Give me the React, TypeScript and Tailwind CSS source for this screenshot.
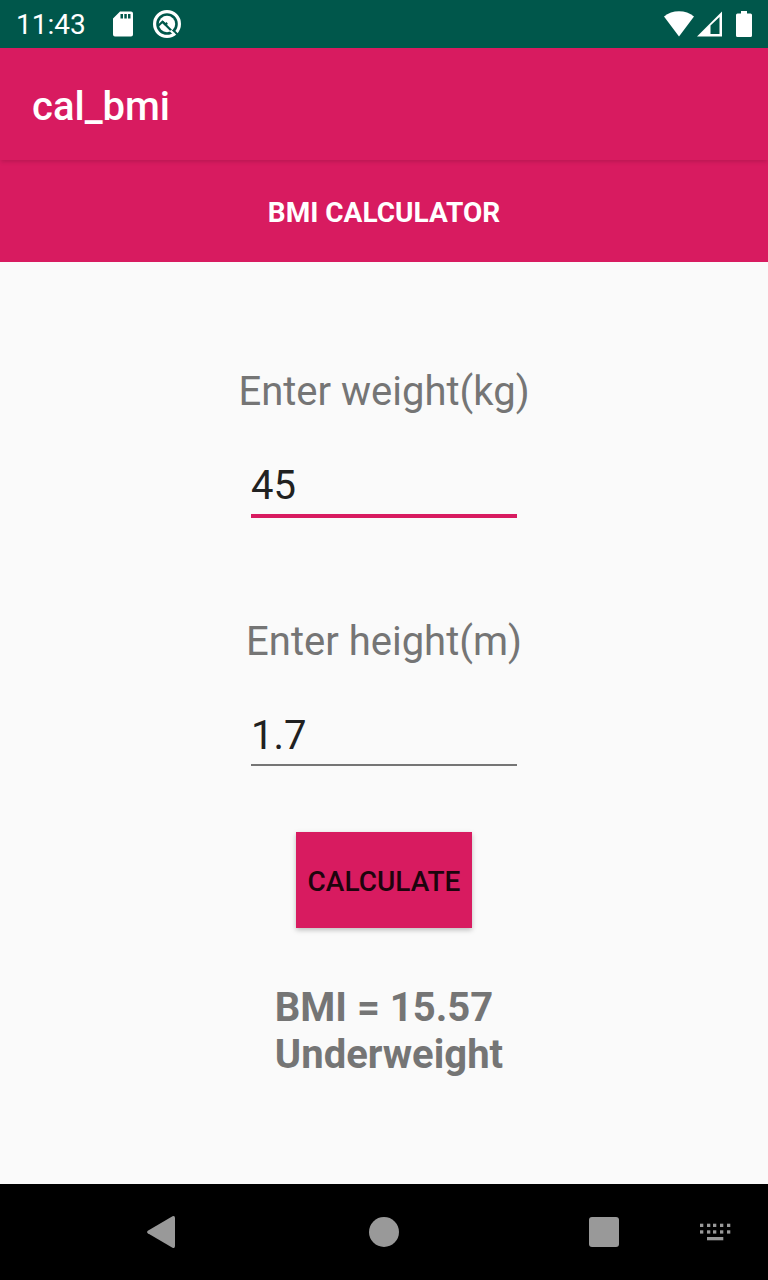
import { useState } from "react";
import type { FormEvent } from "react";

function StatusBar() {
  return (
    <div className="flex h-12 shrink-0 items-center bg-[#00574b] px-4 text-white">
      <span className="pt-0.5 text-[28px] leading-[34px]">11:43</span>
      <svg className="ml-[27px] h-[26px] w-5" viewBox="0 0 20 26" fill="currentColor" aria-hidden="true">
        <path
          fillRule="evenodd"
          d="M7 .5h11a2 2 0 0 1 2 2v21a2 2 0 0 1-2 2H2a2 2 0 0 1-2-2V7.500zM7.500 3v4.500H10V3zM11.300 3v4.500h2.500V3zM15 3v4.500h2.500V3z"
        />
      </svg>
      <svg className="ml-5 size-7" viewBox="0 0 28 28" fill="none" aria-hidden="true">
        <circle cx="14" cy="14" r="12.400" stroke="currentColor" strokeWidth="3.200" />
        <circle cx="14" cy="14" r="8.200" fill="currentColor" />
        <path d="M4.500 16.500L9.500 11.800l2.800 2.600 2-1.400" stroke="#00574b" strokeWidth="2.200" />
        <path d="M9.500 11.800l11 11" stroke="#00574b" strokeWidth="2.200" />
        <path d="M20.500 20.500l5 5" stroke="#00574b" strokeWidth="2" />
        <path d="M17.500 20.500l3.500 3.500" stroke="currentColor" strokeWidth="2.200" />
      </svg>
      <div className="ml-auto flex items-center">
        <svg className="h-[26px] w-[30px]" viewBox="0 0 30 26" fill="currentColor" aria-hidden="true">
          <path d="M0 5.500C8-1.500 22-1.500 30 5.500L15 25.500z" />
        </svg>
        <svg className="ml-[3px] h-[26px] w-[25px]" viewBox="0 0 25 26" fill="currentColor" aria-hidden="true">
          <path fillRule="evenodd" d="M25 .5v25H0zM13.500 14.500V23h9V6z" />
        </svg>
        <svg className="ml-[14px] h-[26px] w-4" viewBox="0 0 16 26" fill="currentColor" aria-hidden="true">
          <path d="M5 0h6v2.500h3.500A1.500 1.500 0 0 1 16 4v20.500a1.500 1.500 0 0 1-1.500 1.500h-13A1.500 1.500 0 0 1 0 24.500V4a1.500 1.500 0 0 1 1.500-1.500H5z" />
        </svg>
      </div>
    </div>
  );
}

function KeyboardIcon() {
  return (
    <svg className="h-5 w-8" viewBox="0 0 32 20" fill="currentColor" aria-hidden="true">
      {[1, 8, 14, 21, 28].map((x) => (
        <g key={x}>
          <rect x={x} y="1.700" width="3.300" height="3.300" />
          <rect x={x} y="8.300" width="3.300" height="3.300" />
        </g>
      ))}
      <rect x="8" y="15" width="16.300" height="3.300" />
    </svg>
  );
}

function NavigationBar() {
  return (
    <nav
      aria-label="System"
      className="grid h-24 shrink-0 grid-cols-[1fr_auto_1fr] items-center bg-black text-[#999999]"
    >
      <div className="flex justify-end pr-[159px]">
        <button type="button" aria-label="Back" className="flex h-12 w-16 items-center justify-center">
          <svg className="h-8 w-7" viewBox="0 0 28 32" fill="currentColor" aria-hidden="true">
            <path d="M25.500.3Q28-.6 28 2v28q0 2.600-2.500 1.700L.8 17.300Q-.6 16 .8 14.700z" />
          </svg>
        </button>
      </div>
      <button type="button" aria-label="Home" className="flex h-12 w-16 items-center justify-center">
        <span className="size-[30px] rounded-full bg-[#999999]" />
      </button>
      <div className="flex items-center pl-[156px]">
        <button type="button" aria-label="Recent apps" className="flex h-12 w-16 items-center justify-center">
          <span className="size-[30px] rounded-[3px] bg-[#999999]" />
        </button>
        <button type="button" aria-label="Switch keyboard" className="ml-[63px] flex h-12 w-8 items-center justify-center">
          <KeyboardIcon />
        </button>
      </div>
    </nav>
  );
}

function bmiCategory(bmi: number) {
  if (bmi < 18.5) return "Underweight";
  if (bmi < 25) return "Normal";
  if (bmi < 30) return "Overweight";
  return "Obese";
}

function bmiReport(weight: string, height: string) {
  const bmi = Number(weight) / (Number(height) * Number(height));
  return Number.isFinite(bmi) ? `BMI = ${bmi.toFixed(2)}\n ${bmiCategory(bmi)}` : "";
}

export default function App() {
  const [weight, setWeight] = useState("45");
  const [height, setHeight] = useState("1.7");
  const [report, setReport] = useState(() => bmiReport("45", "1.7"));

  const calculate = (event: FormEvent) => {
    event.preventDefault();
    setReport(bmiReport(weight, height));
  };

  return (
    <div className="flex min-h-screen flex-col bg-[#fafafa] font-[Roboto,sans-serif]">
      <StatusBar />
      <header className="relative flex h-28 shrink-0 items-center bg-[#d81b60] px-8 pt-1 shadow-[0_3px_4px_-1px_rgba(0,0,0,0.13)]">
        <h1 className="text-[40px] leading-[47px] font-medium text-white">cal_bmi</h1>
      </header>
      <main className="flex flex-1 flex-col">
        <h2 className="bg-[#d81b60] pt-9 pb-[33px] text-center text-[28px] leading-[33px] font-bold text-white">
          BMI CALCULATOR
        </h2>
        <form onSubmit={calculate} className="flex flex-col items-center pt-[106px] text-[40px] leading-[47px]">
          <label htmlFor="weight" className="text-[#757575]">
            Enter weight(kg)
          </label>
          <input
            id="weight"
            inputMode="decimal"
            value={weight}
            onChange={(e) => setWeight(e.target.value)}
            className="mt-[47px] h-14 w-[266px] border-b-4 border-[#d81b60] pb-[5px] text-[#212121] outline-none"
          />
          <label htmlFor="height" className="mt-[100px] text-[#757575]">
            Enter height(m)
          </label>
          <input
            id="height"
            inputMode="decimal"
            value={height}
            onChange={(e) => setHeight(e.target.value)}
            className="mt-[47px] h-[54px] w-[266px] border-b-2 border-[#757575] pb-[5px] text-[#212121] outline-none"
          />
          <button
            type="submit"
            className="mt-[66px] h-24 bg-[#d81b60] px-3 pt-0.5 text-[28px] leading-[33px] font-medium text-[#1d040d] shadow-[0_2px_5px_rgba(0,0,0,0.25)]"
          >
            CALCULATE
          </button>
          <output htmlFor="weight height" className="mt-14 text-center font-bold whitespace-pre text-[#757575]">
            {report}
          </output>
        </form>
      </main>
      <NavigationBar />
    </div>
  );
}
